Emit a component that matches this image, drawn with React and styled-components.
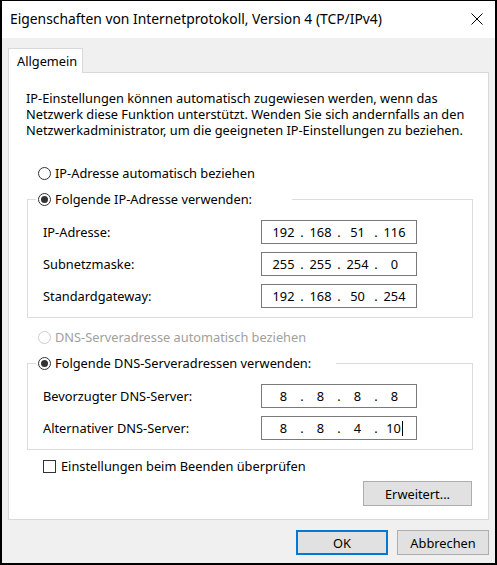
import React from "react";
import styled, { createGlobalStyle } from "styled-components";

const Global = createGlobalStyle`
  html, body { margin: 0; padding: 0; background: #fff; }
  * { box-sizing: border-box; }
  body { font-family: "Noto Sans", "Liberation Sans", sans-serif; font-size: 12.8px; color: #000; }
`;

const Window = styled.div`
  width: 497px;
  height: 565px;
  border: 2px solid #000;
  border-top-width: 1px;
  display: flex;
  flex-direction: column;
  background: #f0f0f0;
`;

const TitleBar = styled.div`
  height: 37px;
  background: #fff;
  display: flex;
  align-items: center;
  justify-content: space-between;
  padding: 0 10px 2px 8px;
`;

const Title = styled.div`
  font-size: 13.85px;
`;

const CloseIcon = styled.svg`
  width: 12px;
  height: 12px;
  margin-right: 2px;
`;

const Body = styled.div`
  flex: 1;
  display: flex;
  flex-direction: column;
  padding: 10px 6px 8px 6px;
`;

const TabStrip = styled.div`
  display: flex;
  height: 25px;
  position: relative;
  z-index: 1;
  margin-bottom: -1px;
`;

const Tab = styled.div`
  width: 75px;
  background: #fff;
  border: 1px solid #d9d9d9;
  border-bottom: none;
  padding: 3px 0 0 8px;
`;

const Panel = styled.div`
  height: 448px;
  background: #fff;
  border: 1px solid #d9d9d9;
  padding: 17px 15px 0 17px;
  display: flex;
  flex-direction: column;
`;

const Intro = styled.p`
  margin: 0;
  line-height: 16px;
  white-space: nowrap;
`;

const RadioRow = styled.label`
  display: flex;
  align-items: center;
  height: 20px;
  gap: 4px;
  white-space: nowrap;
  margin-top: ${(p) => p.$top || 0}px;
  margin-left: ${(p) => p.$indent ?? 12}px;
  color: ${(p) => (p.$disabled ? "#a0a0a0" : "#000")};
`;

const RadioCircle = styled.span`
  flex: none;
  width: 13px;
  height: 13px;
  border-radius: 50%;
  border: 1px solid ${(p) => (p.$disabled ? "#cccccc" : "#333")};
  background: #fff;
  display: flex;
  align-items: center;
  justify-content: center;
  &::after {
    content: "";
    width: 7px;
    height: 7px;
    border-radius: 50%;
    background: #333;
    display: ${(p) => (p.$checked ? "block" : "none")};
  }
`;

const GroupBox = styled.fieldset`
  margin: ${(p) => p.$top || 0}px 0 0 1px;
  padding: 0 15px 9px 15px;
  border: 1px solid #dcdcdc;
  min-width: 0;
  display: flex;
  flex-direction: column;
  gap: 8px;
`;

const Legend = styled.legend`
  padding: 0 0 0 2px;
  margin-left: -7px;
  width: ${(p) => p.$width}px;
  margin-bottom: 11px;
`;

const FieldRow = styled.div`
  display: flex;
  align-items: center;
  height: 24px;
`;

const FieldLabel = styled.span`
  width: 218px;
`;

const IpBox = styled.div`
  width: 156px;
  height: 24px;
  border: 1px solid #7a7a7a;
  background: #fff;
  display: flex;
  align-items: center;
  padding-left: 7px;
`;

const Octet = styled.span`
  width: 29px;
  text-align: center;
`;

const Dot = styled.span`
  width: 8px;
  text-align: center;
`;

const Caret = styled.span`
  display: inline-block;
  width: 1px;
  height: 15px;
  background: #000;
  vertical-align: -3px;
  margin-left: 1px;
`;

const CheckRow = styled.label`
  display: flex;
  align-items: center;
  gap: 5px;
  height: 20px;
  margin: 6px 0 0 17px;
`;

const CheckBox = styled.span`
  width: 13px;
  height: 13px;
  border: 1px solid #333;
  background: #fff;
`;

const PanelActions = styled.div`
  display: flex;
  justify-content: flex-end;
  margin: 5px 1px 0 0;
`;

const Button = styled.button`
  font: inherit;
  color: #000;
  width: ${(p) => p.$width || 92}px;
  height: ${(p) => p.$height || 25}px;
  background: #e1e1e1;
  border: ${(p) => (p.$primary ? "2px solid #0078d7" : "1px solid #adadad")};
  padding: 0;
`;

const Footer = styled.div`
  display: flex;
  justify-content: flex-end;
  gap: 9px;
  margin-top: 10px;
`;

const Radio = ({ checked, disabled, children, top, indent }) => (
  <RadioRow $top={top} $indent={indent} $disabled={disabled}>
    <RadioCircle $checked={checked} $disabled={disabled} />
    {children}
  </RadioRow>
);

const IpField = ({ label, parts, caret }) => (
  <FieldRow>
    <FieldLabel>{label}</FieldLabel>
    <IpBox>
      {parts.map((part, i) => (
        <React.Fragment key={i}>
          {i > 0 && <Dot>.</Dot>}
          <Octet>
            {part}
            {caret && i === parts.length - 1 && <Caret />}
          </Octet>
        </React.Fragment>
      ))}
    </IpBox>
  </FieldRow>
);

export default function App() {
  return (
    <>
      <Global />
      <Window>
        <TitleBar>
          <Title>Eigenschaften von Internetprotokoll, Version 4 (TCP/IPv4)</Title>
          <CloseIcon viewBox="0 0 12 12">
            <path d="M0.5 0.5 L11.5 11.5 M11.5 0.5 L0.5 11.5" stroke="#000" strokeWidth="1" fill="none" />
          </CloseIcon>
        </TitleBar>
        <Body>
          <TabStrip>
            <Tab>Allgemein</Tab>
          </TabStrip>
          <Panel>
            <Intro>
              IP-Einstellungen können automatisch zugewiesen werden, wenn das<br />
              Netzwerk diese Funktion unterstützt. Wenden Sie sich andernfalls an den<br />
              Netzwerkadministrator, um die geeigneten IP-Einstellungen zu beziehen.
            </Intro>
            <Radio top={25}>IP-Adresse automatisch beziehen</Radio>
            <GroupBox $top={6}>
              <Legend $width={256}>
                <Radio checked indent={0}>Folgende IP-Adresse verwenden:</Radio>
              </Legend>
              <IpField label="IP-Adresse:" parts={["192", "168", "51", "116"]} />
              <IpField label="Subnetzmaske:" parts={["255", "255", "254", "0"]} />
              <IpField label="Standardgateway:" parts={["192", "168", "50", "254"]} />
            </GroupBox>
            <Radio top={9} disabled>DNS-Serveradresse automatisch beziehen</Radio>
            <GroupBox $top={6}>
              <Legend $width={300}>
                <Radio checked indent={0}>Folgende DNS-Serveradressen verwenden:</Radio>
              </Legend>
              <IpField label="Bevorzugter DNS-Server:" parts={["8", "8", "8", "8"]} />
              <IpField label="Alternativer DNS-Server:" parts={["8", "8", "4", "10"]} caret />
            </GroupBox>
            <CheckRow>
              <CheckBox />
              Einstellungen beim Beenden überprüfen
            </CheckRow>
            <PanelActions>
              <Button $width={109} $height={25}>Erweitert...</Button>
            </PanelActions>
          </Panel>
          <Footer>
            <Button $primary>OK</Button>
            <Button>Abbrechen</Button>
          </Footer>
        </Body>
      </Window>
    </>
  );
}
